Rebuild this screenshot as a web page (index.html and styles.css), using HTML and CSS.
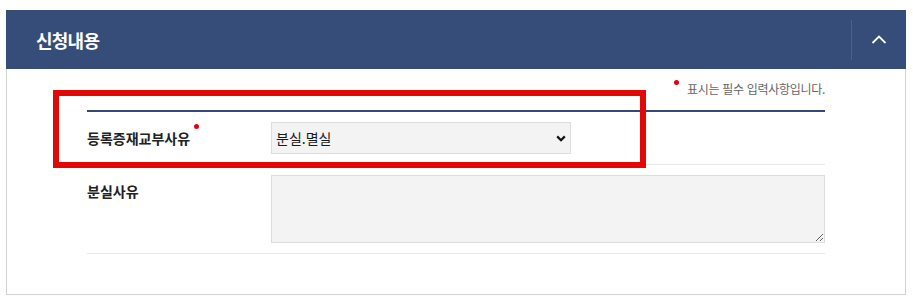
FILE: index.html
```html
<!DOCTYPE html>
<html lang="ko">
<head>
<meta charset="utf-8">
<link rel="stylesheet" href="styles.css">
</head>
<body>
<div class="panel">
  <div class="panel-head">
    <h2 class="panel-title">신청내용</h2>
    <div class="toggle">
      <svg width="16" height="9" viewBox="0 0 16 9"><polyline points="1.5,8 8,1.5 14.5,8" fill="none" stroke="#fff" stroke-width="1.8"/></svg>
    </div>
  </div>
  <div class="panel-body">
    <p class="req-note"><span class="dot"></span>표시는 필수 입력사항입니다.</p>
    <div class="form-table">
      <div class="row">
        <label class="th th-mid">등록증재교부사유<span class="dot dot-label"></span></label>
        <div class="td">
          <div class="select-wrap">
            <select class="select">
              <option>분실.멸실</option>
            </select>
            <svg class="select-arrow" width="10" height="7" viewBox="0 0 10 7"><polyline points="1.2,1.4 5,5.2 8.8,1.4" fill="none" stroke="#111" stroke-width="2.2"/></svg>
          </div>
        </div>
      </div>
      <div class="row">
        <label class="th">분실사유</label>
        <div class="td">
          <textarea class="textarea"></textarea>
        </div>
      </div>
    </div>
    <div class="highlight"></div>
  </div>
</div>
</body>
</html>
```
FILE: styles.css
```css
html, body {
  margin: 0;
  padding: 0;
  background: #fff;
}
body {
  font-family: "Noto Sans CJK KR", "Noto Sans", sans-serif;
  color: #222;
}
.panel {
  width: 900px;
  margin: 10px 0 0 6px;
}
.panel-head {
  height: 59px;
  background: #354d78;
  display: flex;
  align-items: center;
  justify-content: space-between;
}
.panel-title {
  margin: 0;
  padding-left: 30px;
  font-size: 18px;
  font-weight: 700;
  letter-spacing: -0.75px;
  color: #fff;
  line-height: 20px;
}
.toggle {
  width: 55px;
  height: 40px;
  border-left: 1px solid #4c6189;
  display: flex;
  align-items: center;
  justify-content: center;
  padding-bottom: 1px;
  box-sizing: border-box;
}
.panel-body {
  position: relative;
  border: 1px solid #d3d3d3;
  border-top: none;
  padding: 11px 80px 40px;
}
.req-note {
  margin: 0 0 12px;
  text-align: right;
  font-size: 12px;
  line-height: 18px;
  letter-spacing: -0.3px;
  color: #666;
}
.dot {
  display: inline-block;
  width: 5px;
  height: 5px;
  border-radius: 50%;
  background: #e3000f;
  vertical-align: top;
  margin-right: 8px;
}
.dot-label {
  margin: 2px 0 0 4px;
}
.form-table {
  border-top: 2px solid #34497a;
}
.row {
  display: grid;
  grid-template-columns: 184px 1fr;
  padding: 10px 0;
  border-bottom: 1px solid #e8e8e8;
}
.th {
  font-size: 14px;
  font-weight: 700;
  line-height: 32px;
  color: #222;
}
.td {
  display: flex;
}
.select-wrap {
  position: relative;
  width: 300px;
  height: 32px;
}
.select {
  appearance: none;
  -webkit-appearance: none;
  width: 300px;
  height: 32px;
  box-sizing: border-box;
  background-color: #f3f3f3;
  border: 1px solid #ddd;
  border-radius: 0;
  font-family: inherit;
  font-size: 14px;
  color: #1a1a1a;
  padding: 0 4px;
  margin: 0;
  display: block;
}
.select-arrow {
  position: absolute;
  right: 5px;
  top: 13px;
  pointer-events: none;
}
.textarea {
  width: 100%;
  height: 68px;
  box-sizing: border-box;
  background: #f3f3f3;
  border: 1px solid #ddd;
  border-radius: 0;
  margin: 0;
  display: block;
}
.highlight {
  position: absolute;
  left: 46px;
  top: 21px;
  width: 593px;
  height: 78px;
  box-sizing: border-box;
  border: 6px solid #e20808;
  pointer-events: none;
}
```
